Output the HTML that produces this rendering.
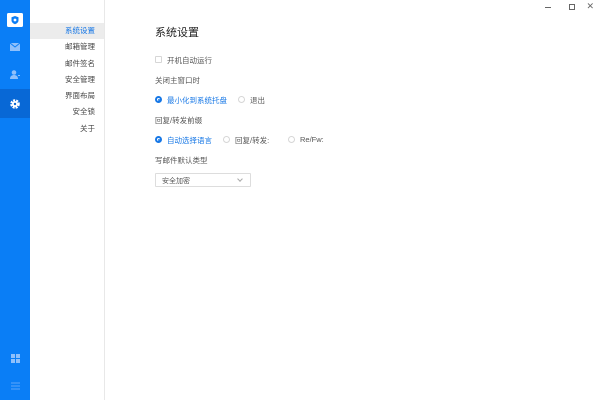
<!DOCTYPE html>
<html><head><meta charset="utf-8"><style>
*{margin:0;padding:0;box-sizing:border-box}
body{width:600px;height:400px;overflow:hidden;background:#fff;font-family:"Liberation Sans","Noto Sans CJK SC",sans-serif;position:relative}
.side{position:absolute;left:0;top:0;width:30px;height:400px;background:#0a7ef6}
.act{position:absolute;left:0;top:89px;width:30px;height:29px;background:#0868d6}
.ico{position:absolute;left:0;width:30px;display:flex;justify-content:center}
.nav{position:absolute;left:30px;top:0;width:75px;height:400px;background:#fff;border-right:1px solid #e8e8e8}
.nav div{height:16.3px;font-size:7.5px;color:#444;text-align:right;padding-right:9px;line-height:16px}
.nav .on{background:#ececec;color:#1677e6}
.t{position:absolute;font-size:7.5px;color:#555;white-space:nowrap}
.cb{position:absolute;width:7px;height:7px;border:1px solid #d6d6d6;border-radius:1px}
.r{position:absolute;width:7px;height:7px;border:1px solid #d6d6d6;border-radius:50%}
.r.on{border:2px solid #1677e6;background:#fff}
.r.on::after{content:"";position:absolute;left:0.5px;top:0.5px;width:2px;height:2px;border-radius:50%;background:#1677e6}
.blue{color:#1677e6}
</style></head><body>
<div class="side">
<div class="act"></div>
<div class="ico" style="top:13px"><svg width="16" height="14"><rect x="0" y="0" width="16" height="14" rx="1.5" fill="#fff"/><path d="M8 3l3.5 1.2v3c0 2-1.5 3.2-3.5 4-2-.8-3.5-2-3.5-4v-3z" fill="#0a7ef6"/><circle cx="8" cy="7" r="1.4" fill="#fff"/></svg></div>
<div class="ico" style="top:43px"><svg width="10" height="8"><rect x="0" y="0" width="10" height="8" fill="#8fc0fb"/><path d="M0 0l5 4 5-4" stroke="#0a7ef6" fill="none"/></svg></div>
<div class="ico" style="top:70px"><svg width="10" height="9"><circle cx="4" cy="2.5" r="2.3" fill="#8fc0fb"/><path d="M0 9c0-3 2-4 4-4s4 1 4 4z" fill="#8fc0fb"/><rect x="8" y="5" width="2" height="1" fill="#8fc0fb"/></svg></div>
<div class="ico" style="top:99px"><svg width="10" height="10"><circle cx="5" cy="5" r="3.6" fill="none" stroke="#fff" stroke-width="2.4" stroke-dasharray="2 1"/><circle cx="5" cy="5" r="3" fill="#fff"/><circle cx="5" cy="5" r="1.2" fill="#0868d6"/></svg></div>
<div class="ico" style="top:354px"><svg width="9" height="9" fill="#8fc0fb"><rect x="0" y="0" width="4" height="4"/><rect x="5" y="0" width="4" height="4"/><rect x="0" y="5" width="4" height="4"/><rect x="5" y="5" width="4" height="4"/></svg></div>
<div class="ico" style="top:382px"><svg width="9" height="8" stroke="#5fa6f9"><path d="M0 1h9M0 4h9M0 7h9"/></svg></div>
</div>
<div class="nav"><div style="height:23px"></div>
<div class="on">系统设置</div><div>邮箱管理</div><div>邮件签名</div><div>安全管理</div><div>界面布局</div><div>安全锁</div><div>关于</div></div>
<div style="position:absolute;right:49px;top:7px;width:6px;border-top:1px solid #666"></div>
<div style="position:absolute;right:25px;top:4px;width:6px;height:6px;border:1px solid #666"></div>
<div style="position:absolute;right:6px;top:1px;font-size:9px;color:#666">✕</div>
<div class="t" style="left:155px;top:24px;font-size:11px;color:#222">系统设置</div>
<div class="cb" style="left:155px;top:56px"></div>
<div class="t" style="left:167px;top:55px">开机自动运行</div>
<div class="t" style="left:155px;top:75px">关闭主窗口时</div>
<div class="r on" style="left:155px;top:96px"></div>
<div class="t blue" style="left:167px;top:95px">最小化到系统托盘</div>
<div class="r" style="left:238px;top:96px"></div>
<div class="t" style="left:250px;top:95px">退出</div>
<div class="t" style="left:155px;top:115px">回复/转发前缀</div>
<div class="r on" style="left:155px;top:136px"></div>
<div class="t blue" style="left:167px;top:135px">自动选择语言</div>
<div class="r" style="left:223px;top:136px"></div>
<div class="t" style="left:235px;top:135px">回复/转发:</div>
<div class="r" style="left:288px;top:136px"></div>
<div class="t" style="left:300px;top:135px">Re/Fw:</div>
<div class="t" style="left:155px;top:155px">写邮件默认类型</div>
<div style="position:absolute;left:155px;top:173px;width:96px;height:14px;border:1px solid #ddd;border-radius:1px"></div>
<div class="t" style="left:162px;top:176px;font-size:7px">安全加密</div>
<div style="position:absolute;left:238px;top:177px;width:4px;height:4px;border-right:1px solid #aaa;border-bottom:1px solid #aaa;transform:rotate(45deg)"></div>
</body></html>
